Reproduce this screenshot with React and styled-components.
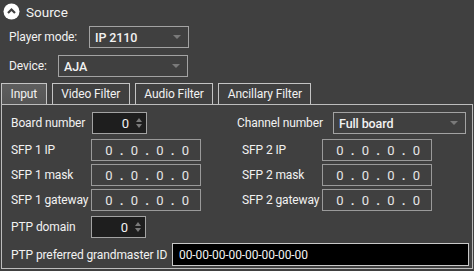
import React from "react";
import styled, { createGlobalStyle } from "styled-components";

const Global = createGlobalStyle`
  html, body { margin: 0; padding: 0; background: #404040; }
  body { font-family: Roboto, "Open Sans", sans-serif; font-size: 12px; letter-spacing: -0.1px; color: #f2f2f2; }
  * { box-sizing: border-box; }
`;

const Root = styled.div`
  width: 474px;
  height: 271px;
  padding: 2px 2px 0 1px;
  display: flex;
  flex-direction: column;
`;

const Header = styled.div`
  display: flex;
  align-items: center;
  gap: 6px;
  height: 19px;
  padding-left: 2px;
  font-size: 13.5px;
  letter-spacing: 0;
`;

const FormRow = styled.div`
  display: flex;
  align-items: center;
  height: 22px;
  margin-top: ${(p) => p.$mt}px;
  padding-left: 8px;
`;

const Label = styled.span`
  width: ${(p) => (p.$w ? `${p.$w}px` : "auto")};
  flex: none;
  white-space: nowrap;
`;

const ComboBox = styled.div`
  width: ${(p) => p.$w}px;
  height: ${(p) => p.$h || 22}px;
  border: 1px solid #a3a3a3;
  display: flex;
  align-items: center;
  justify-content: space-between;
  padding: 0 7px 0 5px;
  font-weight: 500;
  font-size: 12.5px;
  flex: none;
`;

const Arrow = styled.span`
  width: 0;
  height: 0;
  border-left: 4px solid transparent;
  border-right: 4px solid transparent;
  border-top: 4px solid #7a7a7a;
`;

const TabBar = styled.div`
  display: flex;
  gap: 5px;
  margin-top: 6px;
  height: 21px;
`;

const Tab = styled.div`
  height: 21px;
  padding: 0 8.5px;
  display: flex;
  align-items: center;
  border: 1px solid #c4c4c4;
  border-bottom: none;
  background: ${(p) => (p.$active ? "linear-gradient(#5e5e5e, #555555)" : "transparent")};
`;

const Panel = styled.div`
  width: 472px;
  height: 165px;
  border: 1px solid #bdbdbd;
  padding: 7px 0 0 9px;
  display: flex;
  flex-direction: column;
`;

const Grid = styled.div`
  display: grid;
  grid-template-columns: 226px auto;
  grid-auto-rows: 22px;
  row-gap: ${(p) => p.$gap}px;
  margin-top: ${(p) => p.$mt || 0}px;
`;

const Cell = styled.div`
  display: flex;
  align-items: center;
  padding-left: ${(p) => p.$pl || 0}px;
`;

const SpinBox = styled.div`
  width: 55px;
  height: 22px;
  background: #1e1e1e;
  border: 1px solid #a3a3a3;
  display: flex;
  align-items: center;
  justify-content: flex-end;
  gap: 7px;
  padding-right: 4px;
  font-size: 13px;
  flex: none;
`;

const Spinner = styled.span`
  display: flex;
  flex-direction: column;
  gap: 2px;
  &::before, &::after {
    content: "";
    width: 0;
    height: 0;
    border-left: 3.5px solid transparent;
    border-right: 3.5px solid transparent;
  }
  &::before { border-bottom: 4px solid #7a7a7a; }
  &::after { border-top: 4px solid #7a7a7a; }
`;

const IpBox = styled.div`
  width: 110px;
  height: 22px;
  border: 1px solid #9a9a9a;
  display: grid;
  grid-template-columns: repeat(4, 1fr);
  align-items: center;
  padding: 0 2px 0 4px;
  color: #e6e6e6;
  font-size: 13px;
  flex: none;
`;

const Octet = styled.span`
  position: relative;
  text-align: center;
  &:not(:last-child)::after {
    content: ".";
    position: absolute;
    right: -2px;
    font-weight: 700;
  }
`;

const GmBox = styled.div`
  width: 297px;
  height: 23px;
  background: #000;
  border: 1px solid #c8c8c8;
  display: flex;
  align-items: center;
  padding-left: 6px;
  flex: none;
`;

const GmRow = styled.div`
  display: flex;
  align-items: center;
  justify-content: space-between;
  margin-top: 5px;
  padding-right: 3px;
  height: 23px;
`;

function Ip() {
  return (
    <IpBox>
      <Octet>0</Octet>
      <Octet>0</Octet>
      <Octet>0</Octet>
      <Octet>0</Octet>
    </IpBox>
  );
}

function CollapseIcon() {
  return (
    <svg width="17" height="17" viewBox="0 0 17 17">
      <circle cx="8.5" cy="8.5" r="8" fill="#ffffff" />
      <path d="M5 10 L8.5 6.5 L12 10" fill="none" stroke="#404040" strokeWidth="2.2" />
    </svg>
  );
}

export default function App() {
  return (
    <>
      <Global />
      <Root>
        <Header>
          <CollapseIcon />
          <span>Source</span>
        </Header>
        <FormRow $mt={5}>
          <Label $w={80}>Player mode:</Label>
          <ComboBox $w={100}>
            <span>IP 2110</span>
            <Arrow />
          </ComboBox>
        </FormRow>
        <FormRow $mt={7}>
          <Label $w={49}>Device:</Label>
          <ComboBox $w={130}>
            <span>AJA</span>
            <Arrow />
          </ComboBox>
        </FormRow>
        <TabBar>
          <Tab $active>Input</Tab>
          <Tab>Video Filter</Tab>
          <Tab>Audio Filter</Tab>
          <Tab>Ancillary Filter</Tab>
        </TabBar>
        <Panel>
          <Grid $gap={0}>
            <Cell>
              <Label $w={81}>Board number</Label>
              <SpinBox>
                <span>0</span>
                <Spinner />
              </SpinBox>
            </Cell>
            <Cell>
              <Label $w={96}>Channel number</Label>
              <ComboBox $w={133}>
                <span>Full board</span>
                <Arrow />
              </ComboBox>
            </Cell>
          </Grid>
          <Grid $gap={3} $mt={5}>
            <Cell>
              <Label $w={80}>SFP 1 IP</Label>
              <Ip />
            </Cell>
            <Cell $pl={5}>
              <Label $w={80}>SFP 2 IP</Label>
              <Ip />
            </Cell>
            <Cell>
              <Label $w={80}>SFP 1 mask</Label>
              <Ip />
            </Cell>
            <Cell $pl={5}>
              <Label $w={80}>SFP 2 mask</Label>
              <Ip />
            </Cell>
            <Cell>
              <Label $w={80}>SFP 1 gateway</Label>
              <Ip />
            </Cell>
            <Cell $pl={5}>
              <Label $w={80}>SFP 2 gateway</Label>
              <Ip />
            </Cell>
          </Grid>
          <Grid $gap={0} $mt={5}>
            <Cell>
              <Label $w={80}>PTP domain</Label>
              <SpinBox>
                <span>0</span>
                <Spinner />
              </SpinBox>
            </Cell>
          </Grid>
          <GmRow>
            <Label>PTP preferred grandmaster ID</Label>
            <GmBox>00-00-00-00-00-00-00-00</GmBox>
          </GmRow>
        </Panel>
      </Root>
    </>
  );
}
